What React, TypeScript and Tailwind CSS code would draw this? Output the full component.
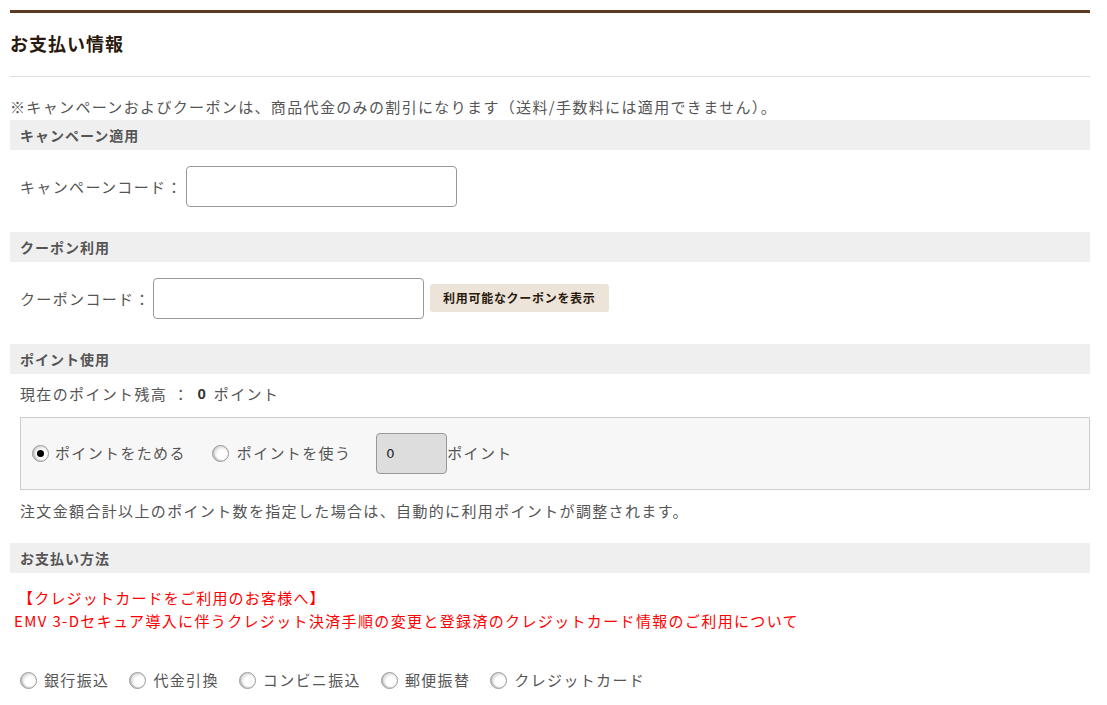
import React from "react";

function Radio({ checked = false }: { checked?: boolean }) {
  return (
    <span className="relative flex h-[17px] w-[17px] shrink-0 items-center justify-center rounded-full border border-[#999] bg-[radial-gradient(circle_at_62%_58%,#ffffff_38%,#dadada_70%,#a0a0a0_100%)] shadow-[inset_1px_-1px_1px_rgba(0,0,0,0.15)]">
      {checked && <span className="h-[7px] w-[7px] rounded-full bg-black" />}
    </span>
  );
}

function Header({ children }: { children: React.ReactNode }) {
  return (
    <div className="flex h-[30px] shrink-0 items-center bg-[#efefef] pl-[10px] text-[14px] font-bold tracking-[1px] text-[#555]">
      {children}
    </div>
  );
}

export default function App() {
  return (
    <div className="min-h-[705px] bg-white pl-[10px] pr-[17px] pt-[10px] font-['Noto_Sans_CJK_JP',sans-serif] text-[15px] tracking-[1.35px] text-[#555]">
      <div className="flex flex-col border-t-[3px] border-[#5b3a24]">
        <h2 className="flex h-[64px] items-center border-b border-[#dddddd] pb-[3px] text-[18px] font-bold tracking-[1px] text-[#2a1a0e]">
          お支払い情報
        </h2>
        <p className="h-[43px] pt-[18px] leading-[24px]">
          ※キャンペーンおよびクーポンは、商品代金のみの割引になります（送料/手数料には適用できません）。
        </p>

        <Header>キャンペーン適用</Header>
        <div className="flex h-[82px] items-start pl-[10px] pt-[16px]">
          <span className="leading-[41px]">キャンペーンコード：</span>
          <input
            type="text"
            className="ml-[3px] h-[41px] w-[271px] rounded-[4px] border border-[#999] bg-white outline-none"
          />
        </div>

        <Header>クーポン利用</Header>
        <div className="flex h-[82px] items-start pl-[10px] pt-[16px]">
          <span className="leading-[41px]">クーポンコード：</span>
          <input
            type="text"
            className="ml-[2px] h-[41px] w-[271px] rounded-[4px] border border-[#999] bg-white outline-none"
          />
          <button className="ml-[6px] mt-[6px] flex h-[28px] w-[179px] items-center justify-center rounded-[3px] bg-[#ede4d9] text-[12px] font-bold tracking-[0.7px] text-[#2a1a0e]">
            利用可能なクーポンを表示
          </button>
        </div>

        <Header>ポイント使用</Header>
        <div className="flex h-[43px] items-center pb-[3px] pl-[10px]">
          <span>現在のポイント残高</span>
          <span className="ml-[6px]">：</span>
          <span className="ml-[8px] font-['Liberation_Sans',sans-serif] font-bold tracking-normal text-[#333]">0</span>
          <span className="ml-[8px]">ポイント</span>
        </div>
        <div className="ml-[10px] flex h-[73px] items-center border border-[#cccccc] bg-[#f7f7f7] pl-[11px]">
          <Radio checked />
          <span className="ml-[6px]">ポイントをためる</span>
          <span className="ml-[26px] flex items-center">
            <Radio />
          </span>
          <span className="ml-[8px]">ポイントを使う</span>
          <div className="ml-[25px] flex h-[41px] w-[71px] items-center rounded-[4px] border border-[#999] bg-[#dddddd] pl-[9px] font-['DejaVu_Sans',sans-serif] text-[13px] tracking-normal text-[#222]">
            0
          </div>
          <span>ポイント</span>
        </div>
        <p className="h-[53px] pl-[10px] pt-[11px] leading-[20px]">
          注文金額合計以上のポイント数を指定した場合は、自動的に利用ポイントが調整されます。
        </p>

        <Header>お支払い方法</Header>
        <div className="pt-[13px] text-[15px] leading-[23px] text-[#ff0000]">
          <p className="pl-[8px] tracking-[1.2px]">【クレジットカードをご利用のお客様へ】</p>
          <p className="pl-[4px] tracking-[1.35px]">
            EMV 3-Dセキュア導入に伴うクレジット決済手順の変更と登録済のクレジットカード情報のご利用について
          </p>
        </div>
        <div className="mt-[38px] flex h-[20px] items-center pl-[10px]">
          {["銀行振込", "代金引換", "コンビニ振込", "郵便振替", "クレジットカード"].map((l, i) => (
            <span key={l} className={`flex items-center ${i > 0 ? "ml-[20px]" : ""}`}>
              <Radio />
              <span className="ml-[7px]">{l}</span>
            </span>
          ))}
        </div>
      </div>
    </div>
  );
}
